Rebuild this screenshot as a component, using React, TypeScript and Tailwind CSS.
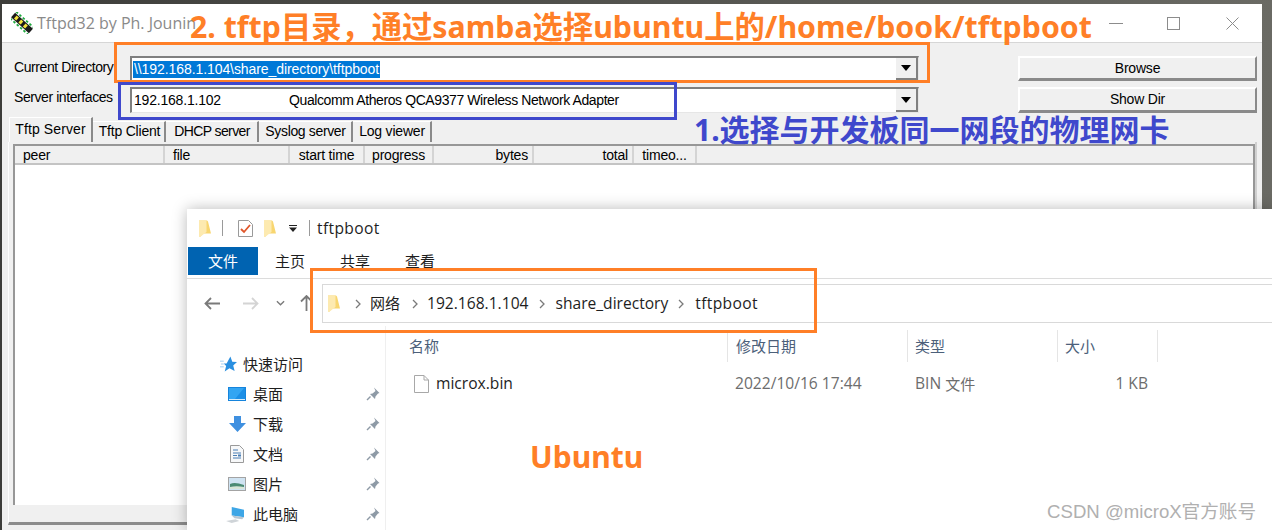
const ui = '"Open Sans", "Noto Sans CJK SC", sans-serif';
const cjk = '"Noto Sans CJK SC", sans-serif';

function FolderIcon({ className = "" }: { className?: string }) {
  return (
    <svg viewBox="0 0 12 17" className={`w-[12px] h-[17px] shrink-0 ${className}`}>
      <path d="M0 0.500h8l1 1 3 12H4l-3 3.500-1-1z" fill="#f8d670" />
      <path d="M0 0.500h7.500v11.500L1 17l-1-1z" fill="#fdeab0" />
    </svg>
  );
}

function ChipIcon() {
  return (
    <svg viewBox="0 0 22 22" className="w-[22px] h-[22px] shrink-0">
      <g transform="rotate(42 11 11)">
        <rect x="-1" y="8" width="24" height="6" fill="#1a1a1a" />
        <path d="M-1 6.500h24M-1 15.500h24" stroke="#1fa83f" strokeWidth="1.800" strokeDasharray="2.500 2" />
        <rect x="2" y="9" width="3" height="4" fill="#f4e23c" />
        <rect x="8" y="9" width="3" height="4" fill="#f4e23c" />
        <rect x="14" y="9" width="3" height="4" fill="#f4e23c" />
      </g>
    </svg>
  );
}

function ComboBox({ children }: { children: React.ReactNode }) {
  return (
    <div className="w-[789px] flex bg-white border-t-2 border-l-2 border-[#7f7f7f] border-b border-r border-b-[#e6e6e6] border-r-[#e6e6e6]">
      <div className="flex-1 flex items-center pl-[1px] min-w-0">{children}</div>
      <div className="w-[22px] flex items-center justify-center bg-[#f0f0f0] border-r-2 border-b-2 border-[#808080]">
        <svg viewBox="0 0 10 6" className="w-[10px] h-[6px]">
          <path d="M0 0h10L5 6z" fill="#000" />
        </svg>
      </div>
    </div>
  );
}

function OldButton({ label }: { label: string }) {
  return (
    <div className="ml-[99px] w-[239px] flex items-center justify-center bg-[#f0f0f0] border-t-2 border-l-2 border-white border-r-2 border-b-[3px] border-r-[#8a8a8a] border-b-[#8a8a8a] text-[14px] text-black">
      {label}
    </div>
  );
}

const tabs = [
  { label: "Tftp Client", w: "w-[73px]", pad: "pl-[2px]" },
  { label: "DHCP server", w: "w-[93px]", pad: "pl-[1px] tracking-[-0.6px]" },
  { label: "Syslog server", w: "w-[94px]", pad: "pl-[1px] tracking-[-0.35px]" },
  { label: "Log viewer", w: "w-[79px]", pad: "pl-[1px]" },
];

const listCols = [
  { label: "peer", w: "w-[150px]", align: "justify-start pl-[8px]" },
  { label: "file", w: "w-[125px]", align: "justify-start pl-[8px]" },
  { label: "start time", w: "w-[75px]", align: "justify-center" },
  { label: "progress", w: "w-[69px]", align: "justify-center" },
  { label: "bytes", w: "w-[100px]", align: "justify-end pr-[4px]" },
  { label: "total", w: "w-[100px]", align: "justify-end pr-[4px]" },
  { label: "timeo...", w: "w-[63px]", align: "justify-center" },
];

function TftpdWindow() {
  return (
    <div
      className="absolute left-[2px] top-[4px] w-[1260px] h-[526px] flex flex-col bg-[#f0f0f0] text-[14px] text-black tracking-[-0.2px]"
      style={{ fontFamily: '"Liberation Sans", sans-serif' }}
    >
      <div className="h-[39px] shrink-0 flex items-center bg-white border-b border-[#d6d6d6] pl-[9px]">
        <ChipIcon />
        <span className="ml-[4px] text-[16px] text-[#8a8a8a] tracking-normal" style={{ fontFamily: ui }}>
          Tftpd32 by Ph. Jounin
        </span>
        <div className="ml-auto flex items-center">
          <div className="w-[14px] h-px bg-[#8c8c8c] mr-[44px]" />
          <div className="w-[13px] h-[13px] border border-[#8c8c8c] mr-[46px]" />
          <svg viewBox="0 0 13 13" className="w-[13px] h-[13px] mr-[23px]">
            <path d="M0.500 0.500l12 12M12.500 0.500l-12 12" stroke="#8c8c8c" fill="none" />
          </svg>
        </div>
      </div>

      <div className="pt-[13px] flex flex-col gap-[6px]">
        <div className="flex h-[25px] pl-[12px]">
          <span className="w-[116px] self-center pb-[2px] tracking-[-0.42px]">Current Directory</span>
          <ComboBox>
            <span className="bg-[#0078d7] text-white h-[17px] leading-[17px] px-px tracking-[-0.08px]">
              \\192.168.1.104\share_directory\tftpboot
            </span>
          </ComboBox>
          <OldButton label="Browse" />
        </div>
        <div className="flex h-[26px] pl-[12px]">
          <span className="w-[116px] self-center pb-[5px] tracking-[-0.42px]">Server interfaces</span>
          <ComboBox>
            <span className="w-[156px] pl-px">192.168.1.102</span>
            <span className="tracking-[-0.4px]">Qualcomm Atheros QCA9377 Wireless Network Adapter</span>
          </ComboBox>
          <OldButton label="Show Dir" />
        </div>
      </div>

      <div className="mt-[4px] ml-[7px] flex items-end h-[25px] shrink-0">
        <div className="w-[84px] h-[25px] pb-[2px] flex items-center justify-center bg-[#f0f0f0] border-t border-l border-white border-r-2 border-r-[#8a8a8a] tracking-[0.1px]">
          Tftp Server
        </div>
        {tabs.map((tab) => (
          <div
            key={tab.label}
            className={`${tab.w} ${tab.pad} h-[21px] pb-[2px] flex items-center justify-center border-t border-white border-r-2 border-r-[#8a8a8a]`}
          >
            {tab.label}
          </div>
        ))}
      </div>

      <div className="w-[1249px] h-[383px] ml-[6px] flex flex-col pl-[4px] pt-[2px] border-l border-white border-b-[3px] border-b-[#8c8c8c] border-r-2 border-r-[#d0d0d0]">
        <div className="flex-1 flex flex-col bg-white border-l-2 border-r-2 border-t-2 border-[#979797] mb-[17px]">
          <div className="h-[19px] flex bg-[#f0f0f0] border-b-2 border-[#c4c4c4]">
            {listCols.map((col) => (
              <div key={col.label} className={`${col.w} flex items-center ${col.align} border-r-2 border-[#d4d4d4] pt-px`}>
                {col.label}
              </div>
            ))}
          </div>
        </div>
      </div>
    </div>
  );
}

function Chevron() {
  return (
    <svg viewBox="0 0 6 10" className="w-[6px] h-[10px] shrink-0">
      <path d="M1 1l4 4-4 4" stroke="#7a7a7a" strokeWidth="1.300" fill="none" />
    </svg>
  );
}

function Pin() {
  return (
    <svg viewBox="0 0 14 14" className="w-[14px] h-[14px]">
      <path d="M8 0.500l5.500 5.500-1.500.5-2.500 3-.5 2.500-5-5 2.500-.5 3-2.500z" fill="#8e9aa6" />
      <path d="M4.500 9.500l-3.500 3.500" stroke="#8e9aa6" strokeWidth="1.500" />
    </svg>
  );
}

function DesktopIcon() {
  return (
    <svg viewBox="0 0 18 14" className="w-[18px] h-[14px]">
      <rect width="18" height="14" fill="#1684dc" />
      <rect x="1" y="1" width="16" height="11" fill="#33a5f2" />
      <path d="M7 12L16 1h1v11z" fill="#1c8fe6" />
      <path d="M1 12.500h16" stroke="#d6ecfb" />
    </svg>
  );
}

function DownloadIcon() {
  return (
    <svg viewBox="0 0 17 16" className="w-[17px] h-[16px]">
      <path d="M5 0h7v7h5l-8.500 9L0 7h5z" fill="#3f90e0" />
    </svg>
  );
}

function DocsIcon() {
  return (
    <svg viewBox="0 0 14 18" className="w-[14px] h-[18px]">
      <path d="M.5.500h9l4 4v13H.5z" fill="#f7f8f9" stroke="#9a9a9a" />
      <path d="M3 5h5M3 8h8M3 10.500h4M3 13h8" stroke="#4a7fb5" />
      <rect x="8" y="9.500" width="3" height="2" fill="#4a7fb5" />
    </svg>
  );
}

function PicturesIcon() {
  return (
    <svg viewBox="0 0 18 14" className="w-[18px] h-[14px]">
      <rect x=".5" y=".5" width="17" height="13" fill="#cfe3f2" stroke="#a3a3a3" />
      <path d="M2 7c4-2 8-1 14 1v4H2z" fill="#4b8a74" />
      <path d="M2 10c4-1 9-1 14 0v2H2z" fill="#d8e5d8" />
    </svg>
  );
}

function PcIcon() {
  return (
    <svg viewBox="0 0 22 18" className="w-[21px] h-[17px] -ml-[3px]">
      <path d="M7 1l13 3v8L7 10z" fill="#3ea6e6" />
      <path d="M7 10l13 2-2 2-8-1z" fill="#b8c6d2" />
      <path d="M1 16l10-2 4 2-8 2z" fill="#cfd4d8" />
    </svg>
  );
}

const sidebarItems = [
  { label: "桌面", icon: <DesktopIcon /> },
  { label: "下载", icon: <DownloadIcon /> },
  { label: "文档", icon: <DocsIcon /> },
  { label: "图片", icon: <PicturesIcon /> },
  { label: "此电脑", icon: <PcIcon /> },
];

const colClass = "grid grid-cols-[341px_180px_150px_100px_100px_1fr]";

function ExplorerWindow() {
  return (
    <div
      className="absolute left-[187px] top-[209px] right-0 bottom-0 flex flex-col bg-white shadow-[0_0_14px_rgba(0,0,0,0.28)] text-[15.6px] text-[#1e1e1e] overflow-hidden"
      style={{ fontFamily: ui }}
    >
      <div className="h-[38px] shrink-0 flex items-center pl-[12px]">
        <FolderIcon />
        <div className="w-px h-[16px] bg-[#9a9a9a] ml-[11px]" />
        <svg viewBox="0 0 15 17" className="w-[15px] h-[17px] ml-[15px]">
          <path d="M.5.500h10l4 4v12H.5z" fill="#fff" stroke="#9a9a9a" />
          <path d="M3 9l3 3 6-7" stroke="#e0562a" strokeWidth="1.800" fill="none" />
        </svg>
        <FolderIcon className="ml-[11px]" />
        <svg viewBox="0 0 8 7" className="w-[8px] h-[7px] ml-[13px]">
          <path d="M0 0h8v1H0zM0 2.500h8L4 7z" fill="#222" />
        </svg>
        <div className="w-px h-[16px] bg-[#9a9a9a] ml-[12px]" />
        <span className="ml-[7px] pt-[2px] tracking-[0.35px]">tftpboot</span>
      </div>

      <div className="h-[28px] shrink-0 flex items-center pl-px text-[15px]" style={{ fontFamily: cjk }}>
        <div className="w-[70px] h-full flex items-center justify-center bg-[#0063b1] text-white">文件</div>
        <span className="ml-[17px] w-[65px]">主页</span>
        <span className="w-[65px]">共享</span>
        <span>查看</span>
      </div>

      <div className="h-[48px] mt-[3px] shrink-0 flex items-start border-t border-[#dcdcdc] pt-[5px]">
        <div className="w-[135px] h-[38px] flex items-center pl-[17px] shrink-0">
          <svg viewBox="0 0 16 13" className="w-[16px] h-[13px]">
            <path d="M7 1L1.500 6.500 7 12M2 6.500h14" stroke="#7a7a7a" strokeWidth="1.800" fill="none" />
          </svg>
          <svg viewBox="0 0 16 13" className="w-[16px] h-[13px] ml-[23px]">
            <path d="M9 1l5.500 5.500L9 12M14 6.500H0" stroke="#d4d4d4" strokeWidth="1.800" fill="none" />
          </svg>
          <svg viewBox="0 0 10 6" className="w-[9px] h-[6px] ml-[17px]">
            <path d="M1 1l4 4 4-4" stroke="#7a7a7a" strokeWidth="1.500" fill="none" />
          </svg>
          <svg viewBox="0 0 13 16" className="w-[13px] h-[16px] ml-[15px]">
            <path d="M1 6.500L6.500 1 12 6.500M6.500 1v15" stroke="#7a7a7a" strokeWidth="1.800" fill="none" />
          </svg>
        </div>
        <div className="flex-1 h-[39px] flex items-center border-y border-l border-[#d9d9d9] pl-[5px] min-w-0">
          <FolderIcon />
          <div className="ml-[15px]"><Chevron /></div>
          <span className="ml-[9px] text-[15px]" style={{ fontFamily: cjk }}>网络</span>
          <div className="ml-[12px]"><Chevron /></div>
          <span className="ml-[9px]">192.168.1.104</span>
          <div className="ml-[11px]"><Chevron /></div>
          <span className="ml-[10px]">share_directory</span>
          <div className="ml-[10px]"><Chevron /></div>
          <span className="ml-[11px] tracking-[0.35px]">tftpboot</span>
        </div>
      </div>

      <div className="flex-1 flex min-h-0">
        <div className="w-[199px] shrink-0 border-r border-[#efefef] flex flex-col pt-[23px]">
          <div className="h-[30px] flex items-center pl-[33px]">
            <svg viewBox="0 0 18 16" className="w-[17px] h-[16px]">
              <path d="M11 0l2 5.500 5 .5-4 3.500 1.500 6L10 12.500 5 16l1.500-6L4 7.500h3z" fill="#2a8fe0" />
              <path d="M0 5h4M1 8h3M0 11h4" stroke="#9ccbf0" />
            </svg>
            <span className="ml-[6px] text-[15px]" style={{ fontFamily: cjk }}>快速访问</span>
          </div>
          {sidebarItems.map((item) => (
            <div key={item.label} className="h-[30px] flex items-center shrink-0">
              <div className="w-[66px] flex justify-end pr-[6px]">
                <div className="w-[20px] flex justify-center">{item.icon}</div>
              </div>
              <span className="text-[15px] w-[113px]" style={{ fontFamily: cjk }}>{item.label}</span>
              <Pin />
            </div>
          ))}
        </div>

        <div className="flex-1 min-w-0 flex flex-col pt-[4px]">
          <div className={`${colClass} h-[32px] text-[15px] text-[#4c607a]`} style={{ fontFamily: cjk }}>
            <div className="pl-[23px] flex items-center">名称</div>
            <div className="pl-[8px] flex items-center border-l border-[#e5e5e5]">修改日期</div>
            <div className="pl-[7px] flex items-center border-l border-[#e5e5e5]">类型</div>
            <div className="pl-[7px] flex items-center border-l border-[#e5e5e5]">大小</div>
            <div className="border-l border-[#e5e5e5]" />
          </div>
          <div className={`${colClass} h-[30px] mt-[7px] text-[#6d6d6d]`}>
            <div className="flex items-center pl-[28px] text-[#1e1e1e]">
              <svg viewBox="0 0 15 18" className="w-[15px] h-[18px] mr-[7px]">
                <path d="M.5.500h9.500l4.500 4.500v12.500H.5z" fill="#fff" stroke="#a8a8a8" />
                <path d="M10 .5V5h4.500" fill="none" stroke="#a8a8a8" />
              </svg>
              microx.bin
            </div>
            <div className="pl-[8px] flex items-center">2022/10/16 17:44</div>
            <div className="pl-[8px] flex items-center">
              BIN&nbsp;<span className="text-[15px]" style={{ fontFamily: cjk }}>文件</span>
            </div>
            <div className="flex items-center justify-end pr-[9px]">1 KB</div>
          </div>
        </div>
      </div>
    </div>
  );
}

export default function App() {
  return (
    <div className="relative w-[1272px] h-[530px] overflow-hidden bg-gradient-to-r from-[#3d3d3a] to-[#6a6a64]">
      <TftpdWindow />
      <ExplorerWindow />

      <div className="absolute left-[114px] top-[42px] w-[816px] h-[41px] border-[3px] border-[#ff7f27]" />
      <div className="absolute left-[118px] top-[82px] w-[559px] h-[38px] border-[3px] border-[#3f48cc]" />
      <div className="absolute left-[310px] top-[268px] w-[507px] h-[65px] border-[3px] border-[#ff7f27]" />

      <div
        className="absolute left-[190px] top-[6px] text-[30.3px] leading-[42px] font-bold text-[#ff7f27] whitespace-nowrap"
        style={{ fontFamily: '"Noto Sans", "Noto Sans CJK SC", sans-serif' }}
      >
        2. tftp目录，通过samba选择ubuntu上的/home/book/tftpboot
      </div>
      <div
        className="absolute left-[694px] top-[109px] text-[30px] leading-[42px] font-bold text-[#3f48cc] whitespace-nowrap"
        style={{ fontFamily: '"Noto Sans", "Noto Sans CJK SC", sans-serif' }}
      >
        1.选择与开发板同一网段的物理网卡
      </div>
      <div
        className="absolute left-[530px] top-[435px] text-[30px] leading-[44px] font-bold text-[#ff7f27]"
        style={{ fontFamily: '"Noto Sans", sans-serif' }}
      >
        Ubuntu
      </div>
      <div
        className="absolute right-[16px] top-[500px] text-[18.6px] leading-[24px] text-[#b0b0b0] whitespace-nowrap"
        style={{ fontFamily: '"Liberation Sans", "Noto Sans CJK SC", sans-serif' }}
      >
        CSDN @microX官方账号
      </div>
    </div>
  );
}
